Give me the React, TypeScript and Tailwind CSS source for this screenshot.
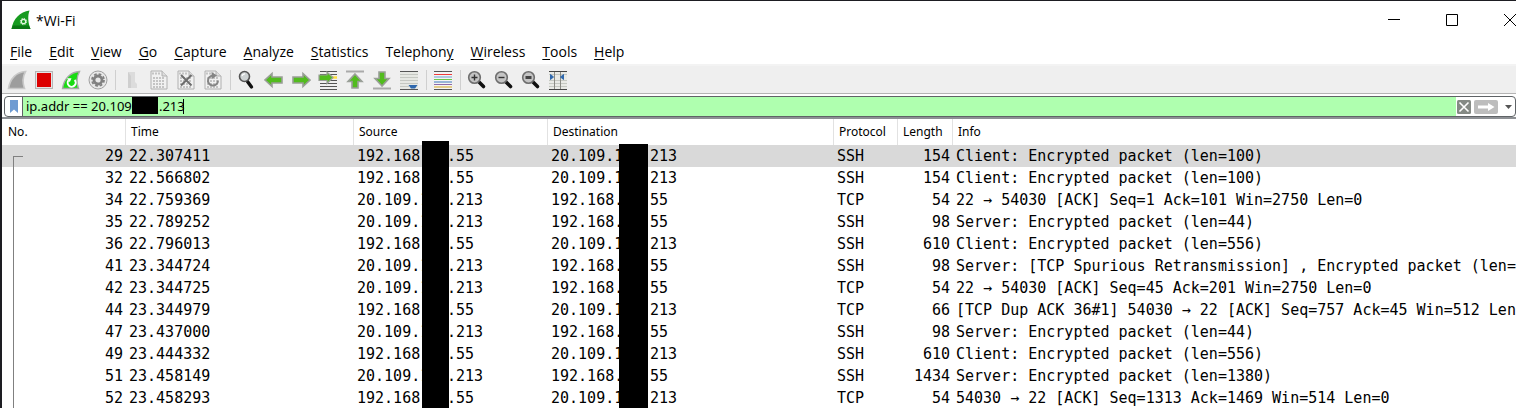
import React from "react";

type Packet = [string, string, "out" | "in", string, string, string];

const packets: Packet[] = [
  ["29", "22.307411", "out", "SSH", "154", "Client: Encrypted packet (len=100)"],
  ["32", "22.566802", "out", "SSH", "154", "Client: Encrypted packet (len=100)"],
  ["34", "22.759369", "in", "TCP", "54", "22 → 54030 [ACK] Seq=1 Ack=101 Win=2750 Len=0"],
  ["35", "22.789252", "in", "SSH", "98", "Server: Encrypted packet (len=44)"],
  ["36", "22.796013", "out", "SSH", "610", "Client: Encrypted packet (len=556)"],
  ["41", "23.344724", "in", "SSH", "98", "Server: [TCP Spurious Retransmission] , Encrypted packet (len=44)"],
  ["42", "23.344725", "in", "TCP", "54", "22 → 54030 [ACK] Seq=45 Ack=201 Win=2750 Len=0"],
  ["44", "23.344979", "out", "TCP", "66", "[TCP Dup ACK 36#1] 54030 → 22 [ACK] Seq=757 Ack=45 Win=512 Len=0"],
  ["47", "23.437000", "in", "SSH", "98", "Server: Encrypted packet (len=44)"],
  ["49", "23.444332", "out", "SSH", "610", "Client: Encrypted packet (len=556)"],
  ["51", "23.458149", "in", "SSH", "1434", "Server: Encrypted packet (len=1380)"],
  ["52", "23.458293", "out", "TCP", "54", "54030 → 22 [ACK] Seq=1313 Ack=1469 Win=514 Len=0"],
];

const menus = ["File", "Edit", "View", "Go", "Capture", "Analyze", "Statistics", "Telephony", "Wireless", "Tools", "Help"];
const accessKeys: Record<string, number> = { Telephony: 8 };

const FIN = "M1.5 18.5C3 9 9 2 18.5 1.5C15.5 7 15.5 13 17.5 18.5Z";
const ARROW_UP = "M10 4L17 11.5H13V18H7V11.5H3Z";
const ARROW_RIGHT = "M19 10L12 3.5V7H2V13H12V16.5Z";

function Icon({ children }: { children: React.ReactNode }) {
  return (
    <svg viewBox="0 0 20 20" className="size-5 shrink-0" aria-hidden="true">
      {children}
    </svg>
  );
}

function Page({ children }: { children?: React.ReactNode }) {
  return (
    <Icon>
      <path d="M2 1H13L18 6V19H2Z" fill="#f1f1f1" stroke="#b0b0b0" />
      <path d="M13 1V6H18" fill="#ddd" stroke="#b0b0b0" />
      <path d="M4 8H16M4 11H16M4 14H16M4 17H16M3 3.5H11" stroke="#c4c4c4" strokeWidth="1.8" strokeDasharray="2 1" />
      {children}
    </Icon>
  );
}

function Lens({ children }: { children?: React.ReactNode }) {
  return (
    <Icon>
      <path d="M12 12L16.5 16.5" stroke="#111" strokeWidth="3.6" strokeLinecap="round" />
      <circle cx="7.5" cy="7.5" r="5.8" fill="#c4c4c4" stroke="#6e6e6e" strokeWidth="1.6" />
      {children}
    </Icon>
  );
}

const tools: { name: string; icon: React.ReactNode; gap?: boolean }[] = [
  {
    name: "Start capture",
    icon: (
      <Icon>
        <path d={FIN} fill="#9d9d9d" stroke="#c9c9c9" strokeWidth="1.6" />
      </Icon>
    ),
  },
  {
    name: "Stop capture",
    icon: (
      <Icon>
        <rect x="1.5" y="1.5" width="17" height="17" fill="#e4e4e4" stroke="#b5b5b5" />
        <rect x="3" y="3" width="14" height="14" fill="#dc0000" />
      </Icon>
    ),
  },
  {
    name: "Restart capture",
    icon: (
      <Icon>
        <path d={FIN} fill="#18dc12" stroke="#a9a9a9" strokeWidth="1.4" />
        <path d="M7.6 10.2A4 4 0 1 0 13.6 10" fill="none" stroke="#fff" strokeWidth="2" />
        <path d="M6 8.2L10.5 8.2L8.8 12.2Z" fill="#fff" />
      </Icon>
    ),
  },
  {
    name: "Capture options",
    icon: (
      <Icon>
        <circle cx="10" cy="10" r="9" fill="#e8e8e8" stroke="#a0a0a0" />
        <circle cx="10" cy="10" r="6" fill="none" stroke="#808080" strokeWidth="1.8" strokeDasharray="2.7 2" />
        <circle cx="10" cy="10" r="4" fill="none" stroke="#808080" strokeWidth="2.8" />
      </Icon>
    ),
  },
  {
    name: "Open file",
    gap: true,
    icon: (
      <Icon>
        <path d="M6 2H13V12L15 14V18H6Z" fill="#dcdcdc" />
        <path d="M6 2L9 6V18H6Z" fill="#cfcfcf" />
      </Icon>
    ),
  },
  { name: "Save file", icon: <Page /> },
  {
    name: "Close file",
    icon: (
      <Page>
        <path d="M5 5L15.5 15.5M15.5 5L5 15.5" stroke="#6e6e6e" strokeWidth="2" />
      </Page>
    ),
  },
  {
    name: "Reload file",
    icon: (
      <Page>
        <path d="M12 6A5 5 0 1 0 15 10.5" fill="none" stroke="#858585" strokeWidth="2" />
        <path d="M8.5 2L14 5.5L9 9Z" fill="#858585" />
      </Page>
    ),
  },
  {
    name: "Find packet",
    gap: true,
    icon: (
      <Icon>
        <path d="M10.5 11.5L14.5 17" stroke="#111" strokeWidth="3.4" strokeLinecap="round" />
        <circle cx="7.5" cy="6.5" r="5" fill="#cdd2d3" stroke="#555" strokeWidth="1.6" />
        <path d="M5 6A3 3 0 0 1 8 3.8" fill="none" stroke="#fff" strokeWidth="1.2" />
      </Icon>
    ),
  },
  {
    name: "Previous packet",
    icon: (
      <Icon>
        <path d={ARROW_RIGHT} transform="rotate(180 10 10)" fill="#52bc1e" stroke="#9a9f98" strokeWidth="1.6" />
      </Icon>
    ),
  },
  {
    name: "Next packet",
    icon: (
      <Icon>
        <path d={ARROW_RIGHT} fill="#52bc1e" stroke="#9a9f98" strokeWidth="1.6" />
      </Icon>
    ),
  },
  {
    name: "Go to packet",
    icon: (
      <Icon>
        <path d="M2 1.5H19M2 4.5H19M2 10.5H19M2 13.5H19M2 16.5H19M2 19.5H19" stroke="#555" />
        <path d="M14 7.5H19" stroke="#ffdf3a" strokeWidth="2.4" />
        <path d="M15 7.5L9 2V5H1V10.5H9V13.5Z" fill="#52bc1e" stroke="#9a9f98" strokeWidth="1.2" />
      </Icon>
    ),
  },
  {
    name: "First packet",
    icon: (
      <Icon>
        <path d="M1 1.5H19" stroke="#aaa" strokeWidth="2" />
        <path d={ARROW_UP} fill="#52bc1e" stroke="#9a9f98" strokeWidth="1.6" />
      </Icon>
    ),
  },
  {
    name: "Last packet",
    icon: (
      <Icon>
        <path d="M1 18.5H19" stroke="#aaa" strokeWidth="2" />
        <path d={ARROW_UP} transform="rotate(180 10 10)" fill="#52bc1e" stroke="#9a9f98" strokeWidth="1.6" />
      </Icon>
    ),
  },
  {
    name: "Auto scroll",
    icon: (
      <Icon>
        <rect x="1" y="1" width="18" height="18" fill="#e6e8e3" />
        <path d="M1 4.5H19M1 7.5H19M1 10.5H19M1 13.5H19M1 16.5H10" stroke="#c5c8c2" />
        <path d="M1 1.5H19M1 19.5H19" stroke="#555" />
        <path d="M9.5 15H18.5L16 18.5H12Z" fill="#2f68ad" />
      </Icon>
    ),
  },
  {
    name: "Colorize",
    gap: true,
    icon: (
      <Icon>
        <rect x="1" y="1" width="18" height="18" fill="#f4f4f4" />
        <path d="M1 1.5H19M1 19.5H19" stroke="#555" />
        <path d="M1 4.5H19" stroke="#ef3b3b" />
        <path d="M1 7H19" stroke="#6f9fd0" />
        <path d="M1 9.5H19" stroke="#6cc64a" />
        <path d="M1 12H19" stroke="#3d77ba" />
        <path d="M1 14.500H19" stroke="#8f6aa8" />
        <path d="M1 17H19" stroke="#d4a51c" />
      </Icon>
    ),
  },
  {
    name: "Zoom in",
    gap: true,
    icon: (
      <Lens>
        <path d="M4.5 7.5H10.5M7.5 4.5V10.5" stroke="#333" strokeWidth="1.4" />
      </Lens>
    ),
  },
  {
    name: "Zoom out",
    icon: (
      <Lens>
        <path d="M4.5 7.5H10.5" stroke="#333" strokeWidth="1.4" />
      </Lens>
    ),
  },
  {
    name: "Normal size",
    icon: (
      <Lens>
        <path d="M4.5 7.5H10.5" stroke="#444" strokeWidth="3" />
      </Lens>
    ),
  },
  {
    name: "Resize columns",
    icon: (
      <Icon>
        <rect x="1" y="1" width="18" height="18" fill="#e9eae6" />
        <path d="M1 4.5H19M1 10.5H19M1 13.5H19M1 16.5H19" stroke="#c5c8c2" />
        <path d="M1 1.5H19M1 19.5H19" stroke="#444" />
        <path d="M6.500 2V19M12.5 2V19" stroke="#8b8b85" />
        <path d="M2.5 4.5L5.5 7L2.5 9.5ZM15.5 4.5L12.5 7L15.5 9.5Z" fill="#2f68ad" stroke="#2f68ad" />
      </Icon>
    ),
  },
];

function MenuLabel({ text }: { text: string }) {
  const k = accessKeys[text] ?? 0;
  return (
    <>
      {text.slice(0, k)}
      <span className="underline underline-offset-2">{text[k]}</span>
      {text.slice(k + 1)}
    </>
  );
}

function Redacted({ head, tail }: { head: string; tail: string }) {
  return (
    <span className="flex">
      <span className="w-[90px] overflow-hidden">{head}</span>
      <span>{tail}</span>
    </span>
  );
}

export default function App() {
  return (
    <div className="h-screen overflow-hidden border-l-2 border-t border-[#1d1d22] bg-white font-['Open_Sans','Noto_Sans',sans-serif] text-black">
      <header className="flex h-[38px] items-center justify-between overflow-hidden pl-[9px]">
        <div className="flex items-center gap-[5px] text-[14px]">
          <svg viewBox="0 0 20 20" className="size-5" aria-hidden="true">
            <path d="M0.5 19C2 9 9 1.5 18.5 0.5C16.5 6 17 13 19.5 19Z" fill="#179b20" />
            <path d="M0.5 19L2 15.5H18L19.5 19Z" fill="#0b7714" />
            <circle cx="12.5" cy="11.5" r="2.2" fill="none" stroke="#e6f7e2" strokeWidth="1.2" />
            <circle cx="12.5" cy="11.5" r="3.2" fill="none" stroke="#e6f7e2" strokeWidth="1" strokeDasharray="1.3 1.2" />
          </svg>
          <h1>*Wi-Fi</h1>
        </div>
        <div className="flex gap-[46px]">
          <button aria-label="Minimize">
            <svg viewBox="0 0 12 12" className="size-3"><path d="M0 5.5H12" stroke="#000" /></svg>
          </button>
          <button aria-label="Maximize">
            <svg viewBox="0 0 12 12" className="size-3"><path d="M.5 .5H11.5V11.5H.5Z" fill="none" stroke="#000" /></svg>
          </button>
          <button aria-label="Close">
            <svg viewBox="0 0 12 12" className="size-3"><path d="M0 0L12 12M12 0L0 12" stroke="#000" /></svg>
          </button>
        </div>
      </header>

      <nav className="flex h-[25px] items-center gap-[17px] pl-2 text-[14px]">
        {menus.map((m) => (
          <button key={m}><MenuLabel text={m} /></button>
        ))}
      </nav>

      <div role="toolbar" className="flex h-[30px] items-center gap-[7px] border-b border-t-2 border-b-[#b4b4b4] border-t-[#f3f3f3] bg-[#efefef] pl-[5px]">
        {tools.map((t) => (
          <React.Fragment key={t.name}>
            {t.gap && <span className="-mr-px h-5 w-px bg-[#cfcfcf]" />}
            <button aria-label={t.name}>{t.icon}</button>
          </React.Fragment>
        ))}
      </div>

      <div className="border-b-2 border-[#8d9094] pl-[2px] pt-[2px]">
        <div className="flex h-[21px] items-stretch rounded border border-[#5f6366] bg-white">
          <button aria-label="Bookmark filter" className="flex w-[17px] items-center justify-center">
            <svg viewBox="0 0 8 13" className="h-[13px] w-2"><path d="M0 0H8V13L4 9.5L0 13Z" fill="#6f9bd2" /></svg>
          </button>
          <label className="relative flex flex-1 border-l border-[#5f6366] bg-[#afffaf]">
            <input
              aria-label="Display filter"
              defaultValue="ip.addr == 20.109.       .213"
              className="w-full bg-transparent pl-[3px] font-['Noto_Sans',sans-serif] text-[13px] outline-none"
            />
            <span className="absolute left-[109px] top-0 h-[17px] w-[26px] bg-black" />
            <span className="absolute left-[160px] top-[2px] h-[15px] w-px bg-black" />
          </label>
          <div className="flex items-center gap-[3px] pl-px">
            <button aria-label="Clear filter">
              <svg viewBox="0 0 14 14" className="size-[14px]">
                <rect width="14" height="14" rx="1.5" fill="#858a85" />
                <path d="M2.5 2.5L11.5 11.5M11.5 2.5L2.5 11.5" stroke="#fff" strokeWidth="1.6" />
              </svg>
            </button>
            <button aria-label="Apply filter">
              <svg viewBox="0 0 24 14" className="h-[14px] w-6">
                <rect width="24" height="14" rx="2" fill="#bdbdbd" />
                <path d="M4 5.5H14V3L20.5 7L14 11V8.5H4Z" fill="#fff" />
              </svg>
            </button>
            <button aria-label="Recent filters" className="flex w-[14px] justify-center">
              <svg viewBox="0 0 7 4" className="h-1 w-[7px]"><path d="M0 0H7L3.5 4Z" fill="#555" /></svg>
            </button>
          </div>
        </div>
      </div>

      <main className="relative">
        <table className="w-full table-fixed border-separate border-spacing-0 whitespace-nowrap">
          <colgroup>
            <col className="w-[124px]" />
            <col className="w-[228px]" />
            <col className="w-[194px]" />
            <col className="w-[286px]" />
            <col className="w-[64px]" />
            <col className="w-[55px]" />
            <col />
          </colgroup>
          <thead className="font-['Noto_Sans',sans-serif] text-[12px]">
            <tr>
              {["No.", "Time", "Source", "Destination", "Protocol", "Length", "Info"].map((h) => (
                <th
                  key={h}
                  scope="col"
                  className="h-[26px] border-r border-[#e2e2e2] py-0 pl-[5px] pr-0 text-left font-normal first:pl-[6px] last:border-r-0"
                >
                  {h}
                </th>
              ))}
            </tr>
          </thead>
          <tbody className="font-['DejaVu_Sans_Mono',monospace] text-[15px] leading-[22px]">
            {packets.map(([no, time, dir, proto, len, info], i) => {
              const local = <Redacted head="192.168.1" tail=".55" />;
              const remote = <Redacted head="20.109.1xx" tail=".213" />;
              return (
                <tr key={no} className={i === 0 ? "bg-[#d9d9d9]" : ""}>
                  <td className="p-0 pr-[3px] text-right">{no}</td>
                  <td className="p-0 pl-[3px]">{time}</td>
                  <td className="p-0 pl-[3px]">{dir === "out" ? local : remote}</td>
                  <td className="p-0 pl-[3px]">{dir === "out" ? remote : local}</td>
                  <td className="p-0 pl-[3px]">{proto}</td>
                  <td className="p-0 pr-[3px] text-right">{len}</td>
                  <td className="overflow-hidden p-0 pl-[3px]">{info}</td>
                </tr>
              );
            })}
          </tbody>
        </table>
        <span className="absolute bottom-0 left-[11px] top-[37px] w-[10px] border-l border-[#808080]">
          <span className="block w-full border-t border-[#808080]" />
        </span>
        <span className="absolute bottom-0 left-[420px] top-[22px] w-[27px] bg-black" />
        <span className="absolute bottom-0 left-[617px] top-[25px] w-[29px] bg-black" />
      </main>
    </div>
  );
}
